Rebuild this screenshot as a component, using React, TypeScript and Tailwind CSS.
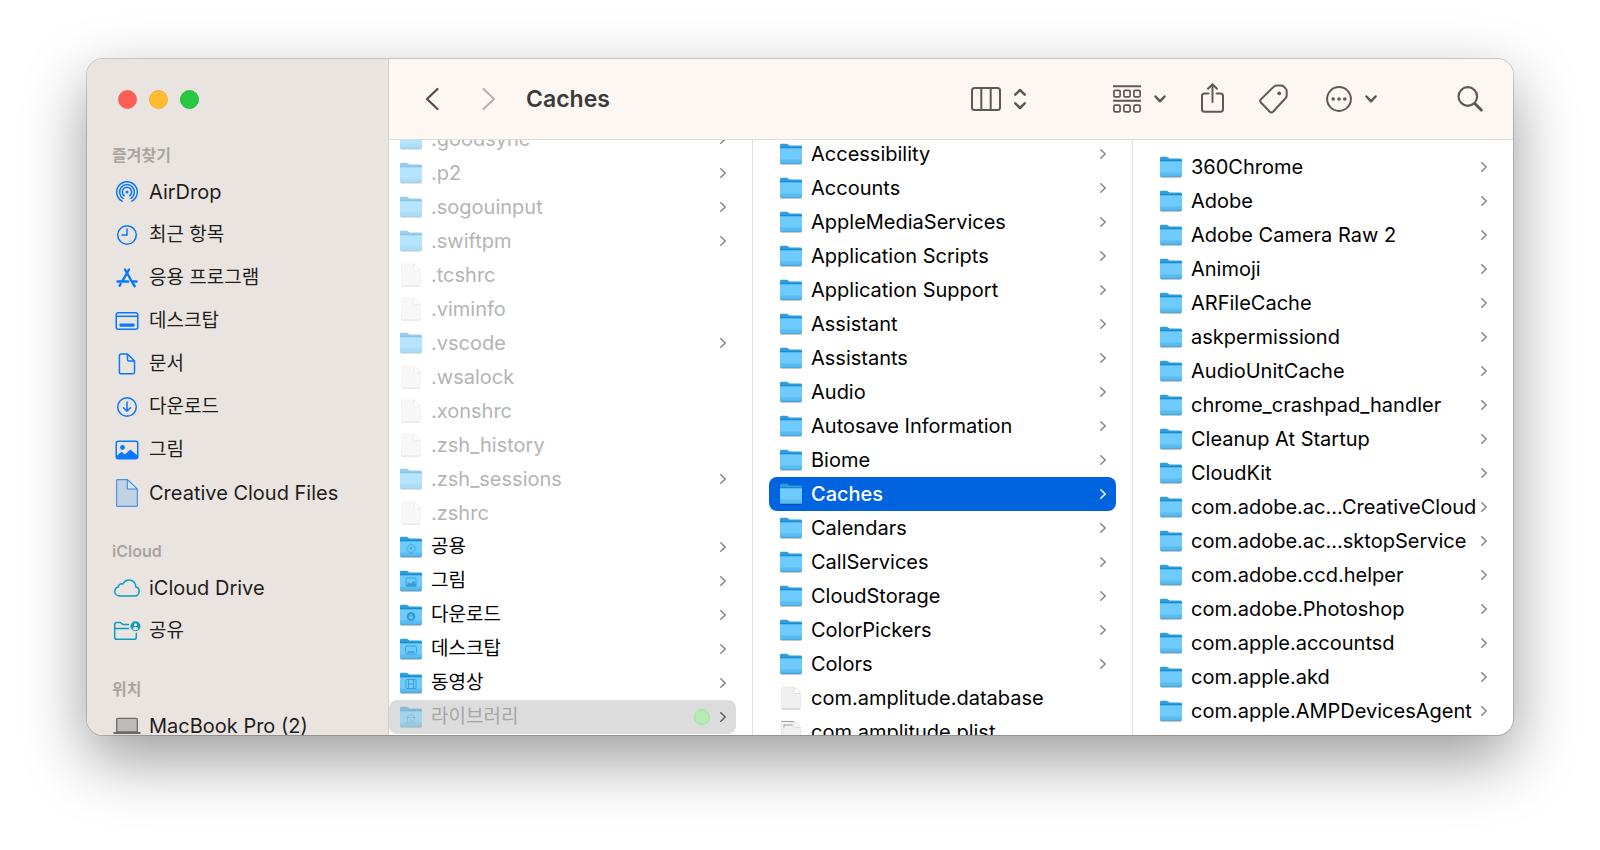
import type { ReactNode } from 'react';
import clsx from 'clsx';

type Glyph = 'public' | 'pictures' | 'downloads' | 'desktop' | 'movies' | 'library';

type Entry = {
    name: string;
    kind?: 'folder' | 'file' | 'plist';
    glyph?: Glyph;
    dim?: boolean;
    state?: 'active' | 'path';
    tag?: boolean;
};

const homeEntries: Entry[] = [
    { name: '.goodsync', dim: true },
    { name: '.p2', dim: true },
    { name: '.sogouinput', dim: true },
    { name: '.swiftpm', dim: true },
    { name: '.tcshrc', kind: 'file', dim: true },
    { name: '.viminfo', kind: 'file', dim: true },
    { name: '.vscode', dim: true },
    { name: '.wsalock', kind: 'file', dim: true },
    { name: '.xonshrc', kind: 'file', dim: true },
    { name: '.zsh_history', kind: 'file', dim: true },
    { name: '.zsh_sessions', dim: true },
    { name: '.zshrc', kind: 'file', dim: true },
    { name: '공용', glyph: 'public' },
    { name: '그림', glyph: 'pictures' },
    { name: '다운로드', glyph: 'downloads' },
    { name: '데스크탑', glyph: 'desktop' },
    { name: '동영상', glyph: 'movies' },
    { name: '라이브러리', glyph: 'library', dim: true, state: 'path', tag: true },
];

const libraryEntries: Entry[] = [
    { name: 'Accessibility' },
    { name: 'Accounts' },
    { name: 'AppleMediaServices' },
    { name: 'Application Scripts' },
    { name: 'Application Support' },
    { name: 'Assistant' },
    { name: 'Assistants' },
    { name: 'Audio' },
    { name: 'Autosave Information' },
    { name: 'Biome' },
    { name: 'Caches', state: 'active' },
    { name: 'Calendars' },
    { name: 'CallServices' },
    { name: 'CloudStorage' },
    { name: 'ColorPickers' },
    { name: 'Colors' },
    { name: 'com.amplitude.database', kind: 'file' },
    { name: 'com.amplitude.plist', kind: 'plist' },
];

const cacheEntries: Entry[] = [
    { name: '360Chrome' },
    { name: 'Adobe' },
    { name: 'Adobe Camera Raw 2' },
    { name: 'Animoji' },
    { name: 'ARFileCache' },
    { name: 'askpermissiond' },
    { name: 'AudioUnitCache' },
    { name: 'chrome_crashpad_handler' },
    { name: 'Cleanup At Startup' },
    { name: 'CloudKit' },
    { name: 'com.adobe.ac...CreativeCloud' },
    { name: 'com.adobe.ac...sktopService' },
    { name: 'com.adobe.ccd.helper' },
    { name: 'com.adobe.Photoshop' },
    { name: 'com.apple.accountsd' },
    { name: 'com.apple.akd' },
    { name: 'com.apple.AMPDevicesAgent' },
];

// Hangul looks bigger than Latin at the same size, so it is set one step down
const labelSize = (text: string) => (/[가-힣]/.test(text) ? 'text-[19px]' : 'text-[20px]');

// --- Row icons ---

const glyphs: Record<Glyph, ReactNode> = {
    public: (
        <>
            <path d="M11 7.5l5 5-5 5-5-5z" />
            <path d="M11 10.8v3.2M9.8 12h2.4" />
        </>
    ),
    pictures: (
        <>
            <rect x="6" y="8" width="10" height="8" rx="1" />
            <path d="M6.5 15.5l2.5-3 2 2 2.5-3 2.5 3.5v1h-9.5z" fill="#1f8cc8" />
        </>
    ),
    downloads: (
        <>
            <circle cx="11" cy="12.5" r="4" fill="#1f8cc8" />
            <path d="M11 10v4.5M9 12.7l2 2 2-2" stroke="#6ecbfb" strokeWidth="1.3" />
        </>
    ),
    desktop: (
        <>
            <rect x="5.5" y="8" width="11" height="8" rx="1.5" />
            <path d="M7.5 14h7" strokeWidth="1.5" />
        </>
    ),
    movies: (
        <>
            <rect x="6" y="7.5" width="10" height="9" rx="1" />
            <path d="M8.5 7.5v9M13.5 7.5v9M8.5 12h5" />
        </>
    ),
    library: <path d="M6 17h10M7.500 15.500v-4h7v4M6.500 11.500l4.500-3.500 4.500 3.500M9.500 15.500c0-2 3-2 3 0" />,
};

function FolderIcon({ glyph }: { glyph?: Glyph }) {
    return (
        <svg width="22" height="22" viewBox="0 0 22 22" aria-hidden="true">
            <rect x="0.5" y="19.5" width="21" height="2.3" rx="1" fill="#000" opacity="0.3" />
            <path d="M0 2.200C0 1.200.6.700 1.500.700h5.200c.7 0 1 .2 1.500.7l1.200 1.100h11.100c.9 0 1.500.5 1.500 1.500V9H0z" fill="#2f9fdb" />
            <path d="M0 4.300h22V6H0z" fill="#0f83cb" />
            <path d="M0 5.300h22v14c0 .9-.5 1.400-1.400 1.400H1.400C.5 20.700 0 20.200 0 19.300z" fill="#6ecbfb" />
            <path d="M0 16.500h22v2.800c0 .9-.5 1.400-1.400 1.400H1.400C.5 20.700 0 20.200 0 19.300z" fill="#5abcf0" />
            <path d="M.5 20.300h21" stroke="#3f9fd6" strokeWidth="0.8" />
            {glyph && (
                <g fill="none" stroke="#1f8cc8" strokeWidth="0.9" opacity="0.75">
                    {glyphs[glyph]}
                </g>
            )}
        </svg>
    );
}

function FileIcon({ plist }: { plist?: boolean }) {
    return (
        <svg width="22" height="24" viewBox="0 0 22 24" aria-hidden="true">
            <path d="M2.500 1h11.500l6.500 6.500v14.500c0 .600-.4 1-1 1H2.500c-.6 0-1-.4-1-1v-20c0-.6.4-1 1-1z" fill="#f0f0f0" stroke="#e6e6e6" strokeWidth="0.8" />
            <path d="M14 1v5.500c0 .600.400 1 1 1h5.500z" fill="#fff" stroke="#d4d4d4" strokeWidth="0.8" />
            <path d="M2 23.200h18" stroke="#c6c6c6" strokeWidth="0.9" />
            {plist && <path d="M1.700 1.500h12M4 5h8.500M4 4.500v3" stroke="#9a9a9a" strokeWidth="0.9" fill="none" />}
        </svg>
    );
}

// --- Sidebar icons ---

const AirDropIcon = (
    <svg width="24" height="24" viewBox="0 0 24 24" fill="none" stroke="#0a77ff" strokeWidth="1.5" strokeLinecap="round">
        <path d="M7.200 21.200a10.300 10.300 0 1 1 9.600 0" />
        <path d="M8.200 18.300a7.400 7.400 0 1 1 7.600 0" />
        <path d="M9.300 15.600a4.600 4.600 0 1 1 5.400 0" />
        <circle cx="12" cy="12" r="1.5" fill="#0a77ff" stroke="none" />
    </svg>
);

const RecentsIcon = (
    <svg width="22" height="22" viewBox="0 0 22 22" fill="none" stroke="#0a77ff" strokeWidth="1.5" strokeLinecap="round">
        <circle cx="11" cy="11" r="9.3" />
        <path d="M11 5v6H6" />
    </svg>
);

const AppsIcon = (
    <svg width="22" height="22" viewBox="0 0 22 22" fill="none" stroke="#0a77ff" strokeWidth="2.4" strokeLinecap="round">
        <path d="M9 2.500l8.500 15" />
        <path d="M13 2.500L6.500 13.800" />
        <path d="M1.500 14.500h10.700M16.500 14.500h4" />
        <path d="M4.600 17l-1 1.800" />
        <path d="M18 18l.7 1.200" />
    </svg>
);

const DesktopIcon = (
    <svg width="24" height="20" viewBox="0 0 24 20" fill="none" stroke="#0a77ff" strokeWidth="1.5">
        <rect x="1.25" y="1.75" width="21.5" height="16.5" rx="2" />
        <path d="M1.500 5.300h21" />
        <rect x="4.5" y="12.5" width="15" height="3.3" rx="0.8" fill="#0a77ff" stroke="none" />
    </svg>
);

const DocumentIcon = (
    <svg width="18" height="22" viewBox="0 0 18 22" fill="none" stroke="#0a77ff" strokeWidth="1.5" strokeLinejoin="round">
        <path d="M3 1h6.500L16.500 8v11.200c0 1-.6 1.600-1.600 1.600H3c-1 0-1.600-.6-1.600-1.600V2.600C1.400 1.600 2 1 3 1z" />
        <path d="M9.500 1v5.500c0 1 .5 1.500 1.500 1.500h5.500" />
    </svg>
);

const DownloadsIcon = (
    <svg width="22" height="22" viewBox="0 0 22 22" fill="none" stroke="#0a77ff" strokeWidth="1.5" strokeLinecap="round" strokeLinejoin="round">
        <circle cx="11" cy="11" r="9.3" />
        <path d="M11 6v9M7.500 11.800L11 15.200l3.500-3.400" />
    </svg>
);

const PicturesIcon = (
    <svg width="24" height="20" viewBox="0 0 24 20">
        <rect x="1.25" y="1.25" width="21.5" height="17.5" rx="2" fill="none" stroke="#0a77ff" strokeWidth="1.5" />
        <circle cx="7.5" cy="7.5" r="2.4" fill="#0a77ff" />
        <path d="M1.500 16l5-4.200 3.500 2.800 5.300-5.100 7.200 6v2c0 1-.5 1.300-1.500 1.300H3c-1 0-1.500-.4-1.500-1.300z" fill="#0a77ff" />
    </svg>
);

const CreativeCloudIcon = (
    <svg width="22" height="28" viewBox="0 0 22 28" stroke="#2a86e8" strokeWidth="1">
        <path d="M.7.700h11.300l9.300 9.300v17.300H.700z" fill="#c3d2e3" />
        <path d="M11.300.700v9.300h10z" fill="#dde3ea" />
    </svg>
);

const CloudIcon = (
    <svg width="26" height="18" viewBox="0 0 26 18" fill="none" stroke="#0c9dbd" strokeWidth="1.5" strokeLinejoin="round">
        <path d="M6 17c-3 0-5.200-1.900-5.200-4.600 0-2.200 1.400-3.900 3.400-4.400.1-2.300 2.600-3.900 4.800-3C10.200 2.500 12.300 1 15 1c3.900 0 6.800 3 6.900 6.900 2 .5 3.300 2.200 3.300 4.400 0 2.700-2 4.700-4.900 4.700z" />
    </svg>
);

const SharedIcon = (
    <svg width="28" height="20" viewBox="0 0 28 20" fill="none" stroke="#0c9dbd" strokeWidth="1.5">
        <path d="M16 3.600h-5.500c-.6 0-.9-.2-1.300-.6L8.300 2.200c-.4-.4-.8-.6-1.400-.6H3.800C2.500 1.600 1.700 2.400 1.700 3.700v12.500c0 1.400.8 2.100 2.100 2.100h17.400c1.400 0 2.100-.7 2.100-2.100v-4.500" />
        <path d="M1.700 7.500h14.500" />
        <circle cx="22.5" cy="5.2" r="5" fill="#0c9dbd" stroke="none" />
        <circle cx="22.5" cy="3.8" r="1.5" fill="#e9e4e0" stroke="none" />
        <path d="M19.600 8.200c.4-1.700 1.500-2.300 2.900-2.300s2.500.6 2.900 2.300c-1.800 1.300-4 1.300-5.800 0z" fill="#e9e4e0" stroke="none" />
    </svg>
);

const LaptopIcon = (
    <svg width="28" height="18" viewBox="0 0 28 18">
        <path d="M3.700 15V2.600c0-.8.5-1.300 1.300-1.300h18c.8 0 1.300.5 1.300 1.300V15z" fill="#bdbab8" stroke="#6c6a69" strokeWidth="1.3" />
        <rect x="0.3" y="15" width="27.4" height="2" rx="0.9" fill="#6c6a69" />
    </svg>
);

const sections = [
    {
        title: '즐겨찾기',
        items: [
            { label: 'AirDrop', icon: AirDropIcon },
            { label: '최근 항목', icon: RecentsIcon },
            { label: '응용 프로그램', icon: AppsIcon },
            { label: '데스크탑', icon: DesktopIcon },
            { label: '문서', icon: DocumentIcon },
            { label: '다운로드', icon: DownloadsIcon },
            { label: '그림', icon: PicturesIcon },
            { label: 'Creative Cloud Files', icon: CreativeCloudIcon },
        ],
    },
    {
        title: 'iCloud',
        items: [
            { label: 'iCloud Drive', icon: CloudIcon },
            { label: '공유', icon: SharedIcon },
        ],
    },
    {
        title: '위치',
        items: [{ label: 'MacBook Pro (2)', icon: LaptopIcon }],
    },
];

function Sidebar() {
    return (
        <aside className="flex w-[302px] shrink-0 flex-col overflow-hidden border-r border-[#d5d0cc] bg-[#e9e4e0] pt-[31px]">
            <div className="flex shrink-0 gap-3 pl-[31px]">
                <button aria-label="닫기" className="size-[19px] rounded-full border border-[#f0665e] bg-[#ff5f57]" />
                <button aria-label="최소화" className="size-[19px] rounded-full border border-[#efb040] bg-[#febc2e]" />
                <button aria-label="확대" className="size-[19px] rounded-full border border-[#28b83c] bg-[#28c840]" />
            </div>
            <nav className="mt-[33px] flex flex-col gap-6">
                {sections.map((section) => (
                    <section key={section.title}>
                        <h2 className="h-7 pl-[25px] text-[16px] leading-[26px] font-semibold text-[#a8a4a1]">{section.title}</h2>
                        <ul>
                            {section.items.map((item) => (
                                <li key={item.label}>
                                    <a href="#" className="flex h-[43px] items-center gap-2 pl-[26px] text-[#1f1d1c]">
                                        <span className="flex w-7 shrink-0 justify-center">{item.icon}</span>
                                        <span className={clsx('whitespace-nowrap', labelSize(item.label))}>{item.label}</span>
                                    </a>
                                </li>
                            ))}
                        </ul>
                    </section>
                ))}
            </nav>
        </aside>
    );
}

function SmallChevron() {
    return (
        <svg width="12" height="8" viewBox="0 0 12 8" fill="none" stroke="#5c5957" strokeWidth="2.5" strokeLinecap="round" strokeLinejoin="round">
            <path d="M1.500 1.500L6 6.300l4.500-4.800" />
        </svg>
    );
}

function Toolbar() {
    return (
        <header className="flex h-[81px] shrink-0 items-center border-b border-[#e3ded9] bg-[#fcf7f3] pr-[30px] pl-9">
            <button aria-label="뒤로">
                <svg width="14" height="24" viewBox="0 0 14 24" fill="none" stroke="#4f4c4a" strokeWidth="2.2" strokeLinecap="round" strokeLinejoin="round">
                    <path d="M12.500 2L2 12l10.500 10" />
                </svg>
            </button>
            <button aria-label="앞으로" className="ml-[43px]" disabled>
                <svg width="14" height="24" viewBox="0 0 14 24" fill="none" stroke="#b7b3b0" strokeWidth="2.2" strokeLinecap="round" strokeLinejoin="round">
                    <path d="M1.500 2L12 12 1.500 22" />
                </svg>
            </button>
            <h1 className="ml-[30px] text-[23px] font-semibold text-[#3d3b39]">Caches</h1>

            <div className="ml-auto flex items-center">
                <button aria-label="보기" className="flex items-center gap-[13px]">
                    <svg width="30" height="24" viewBox="0 0 30 24" fill="none" stroke="#5c5957" strokeWidth="2">
                        <rect x="1" y="1" width="28" height="22" rx="2.5" />
                        <path d="M10.300 1v22M19.700 1v22" />
                    </svg>
                    <svg width="12" height="22" viewBox="0 0 12 22" fill="none" stroke="#5c5957" strokeWidth="2.5" strokeLinecap="round" strokeLinejoin="round">
                        <path d="M1.300 6.700L6 2l4.700 4.700M1.300 15.300L6 20l4.700-4.700" />
                    </svg>
                </button>
                <button aria-label="그룹" className="ml-[87px] flex items-center gap-[13px]">
                    <svg width="28" height="28" viewBox="0 0 28 28" fill="none" stroke="#5c5957" strokeWidth="1.7">
                        <path d="M0 1.200h28M0 15.800h28" strokeWidth="1.9" />
                        <rect x="0.9" y="5.3" width="6.2" height="6.6" rx="1.2" />
                        <rect x="10.9" y="5.3" width="6.2" height="6.6" rx="1.2" />
                        <rect x="20.9" y="5.3" width="6.2" height="6.6" rx="1.2" />
                        <rect x="0.9" y="20.2" width="6.2" height="6.6" rx="1.2" />
                        <rect x="10.9" y="20.2" width="6.2" height="6.6" rx="1.2" />
                        <rect x="20.9" y="20.2" width="6.2" height="6.6" rx="1.2" />
                    </svg>
                    <SmallChevron />
                </button>
                <button aria-label="공유" className="ml-[35px]">
                    <svg width="23" height="32" viewBox="0 0 23 32" fill="none" stroke="#5c5957" strokeWidth="2" strokeLinecap="round" strokeLinejoin="round">
                        <path d="M7.500 10.500H3.600C2 10.500 1 11.400 1 13v13.300c0 1.600 1 2.500 2.600 2.500h15.800c1.600 0 2.600-.9 2.600-2.500V13c0-1.600-1-2.500-2.600-2.500h-3.900" />
                        <path d="M11.500 19V1.500M7 5.800l4.500-4.500L16 5.800" />
                    </svg>
                </button>
                <button aria-label="태그" className="ml-[35px]">
                    <svg width="29" height="30" viewBox="0 0 29 30" fill="none" stroke="#5c5957" strokeWidth="2" strokeLinejoin="round">
                        <path d="M14.800 2.600c.8-.9 1.500-1.200 2.700-1.200h4.500c1.100 0 1.800.2 2.500.9l2.200 2.300c.7.700 1 1.400 1 2.500v4.400c0 1.200-.3 1.900-1.200 2.800L14 27.700c-1 1-2.200 1-3.200 0L1.900 18.500c-1-1-1-2.100 0-3.100z" />
                        <circle cx="20.2" cy="9.3" r="1.9" fill="#5c5957" stroke="none" />
                    </svg>
                </button>
                <button aria-label="동작" className="ml-[38px] flex items-center gap-[13px]">
                    <svg width="26" height="26" viewBox="0 0 26 26" fill="none" stroke="#5c5957" strokeWidth="2">
                        <circle cx="13" cy="13" r="11.9" />
                        <g fill="#5c5957" stroke="none">
                            <circle cx="7.2" cy="13" r="1.8" />
                            <circle cx="13" cy="13" r="1.8" />
                            <circle cx="18.8" cy="13" r="1.8" />
                        </g>
                    </svg>
                    <SmallChevron />
                </button>
                <button aria-label="검색" className="ml-20">
                    <svg width="26" height="26" viewBox="0 0 26 26" fill="none" stroke="#5c5957" strokeLinecap="round">
                        <circle cx="10.8" cy="10.5" r="9.3" strokeWidth="2.2" />
                        <path d="M18 17.700l6.300 6.300" strokeWidth="3" />
                    </svg>
                </button>
            </div>
        </header>
    );
}

function Row({ entry }: { entry: Entry }) {
    const { name, kind = 'folder', glyph, dim, state, tag } = entry;
    return (
        <li>
            <button
                className={clsx(
                    'flex h-[34px] w-full items-center rounded-lg pr-[10px] pl-[11px] text-left',
                    state === 'active' && 'bg-[#0064e1] font-medium text-white',
                    state === 'path' && 'bg-[#dcdcdc] text-[#a6a6a6]',
                    !state && (dim ? 'text-[#b4b4b4]' : 'text-black'),
                )}
            >
                <span className={clsx('mr-[9px] flex w-[22px] shrink-0 justify-center', dim && 'opacity-50')}>
                    {kind === 'folder' ? <FolderIcon glyph={glyph} /> : <FileIcon plist={kind === 'plist'} />}
                </span>
                <span className={clsx('min-w-0 flex-1 whitespace-nowrap', labelSize(name))}>{name}</span>
                {tag && <span className="mr-[10px] size-4 shrink-0 rounded-full border border-[#9fe29f] bg-[#b4ecb4]" />}
                {kind === 'folder' && (
                    <svg width="6" height="10" viewBox="0 0 6 10" fill="none" stroke={state === 'active' ? '#ffffff' : state === 'path' ? '#5f5f5f' : '#858585'} strokeWidth="1.5" strokeLinecap="round" strokeLinejoin="round" className="shrink-0">
                        <path d="M.8.800L5.200 5 .800 9.200" />
                    </svg>
                )}
            </button>
        </li>
    );
}

function EntryList({ entries, className }: { entries: Entry[]; className: string }) {
    return (
        <ul className={className}>
            {entries.map((entry) => (
                <Row key={entry.name} entry={entry} />
            ))}
        </ul>
    );
}

export default function App() {
    return (
        <div className="h-screen overflow-hidden bg-white px-[87px] pt-[59px] pb-[115px] font-['Inter','Noto_Sans_CJK_KR',sans-serif] leading-6">
            <main className="flex h-full overflow-hidden rounded-2xl bg-white shadow-[0_0_0_1px_rgba(0,0,0,0.16),0_24px_64px_rgba(0,0,0,0.4)]">
                <Sidebar />
                <div className="flex min-w-0 flex-1 flex-col">
                    <Toolbar />
                    <div className="flex min-h-0 flex-1">
                        <div className="min-w-0 flex-[363] overflow-hidden border-r border-[#e0e0e0]">
                            <EntryList entries={homeEntries} className="-mt-[18px] pr-4" />
                        </div>
                        <div className="min-w-0 flex-[379] overflow-hidden border-r border-[#e0e0e0]">
                            <EntryList entries={libraryEntries} className="-mt-[3px] px-4" />
                        </div>
                        <div className="min-w-0 flex-[380] overflow-hidden">
                            <EntryList entries={cacheEntries} className="px-4 pt-[10px]" />
                        </div>
                    </div>
                </div>
            </main>
        </div>
    );
}
